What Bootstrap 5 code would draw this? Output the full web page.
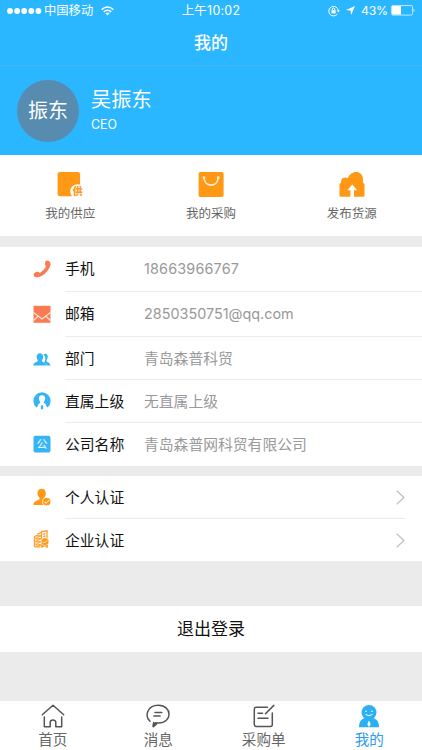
<!DOCTYPE html>
<html lang="zh-CN">
<head>
<meta charset="utf-8">
<meta name="viewport" content="width=device-width, initial-scale=1">
<title>我的</title>
<link href="https://cdn.jsdelivr.net/npm/bootstrap@5.3.0/dist/css/bootstrap.min.css" rel="stylesheet">
<style>
body{font-family:Inter,"Noto Sans CJK SC",sans-serif;background:#ebebeb;color:#111;line-height:1;height:750px;overflow:hidden}
svg{display:block;flex:none}
.top-area{background:#2bb7ff;height:155px}
.status{height:22px;font-size:12.3px;padding:0 7px 0 7px}
.status>div{flex:1 1 0}
.status>.clock{flex:none;font-size:12.4px;letter-spacing:.3px;padding-top:1px}
.carrier{padding:1px 0 0 2px}
.percent{letter-spacing:-.2px;padding:0 3px 0 6px}
.title-bar{height:44px;font-size:17px;font-weight:500;border-bottom:1px solid #43b4ef;padding-bottom:1px}
.profile{height:89px;padding-left:17px;gap:12px}
.avatar{width:62px;height:62px;background:#588bb0;font-size:20px;padding-top:1px}
.pname{font-size:20.2px;margin:1px 0 9px}
.prole{font-size:12.4px}
.shortcuts{height:81px;font-size:12.5px;color:#666}
.shortcuts svg{margin:15px 0 10px}
.contact{margin-top:11px}
.certs{margin-top:10px}
.info-row{height:43px;padding-left:33px;font-size:14.8px}
.info-row.tall{height:45px}
.info-row>svg{margin-bottom:2px}
.info-row>svg.people{margin:3px 0 0}
.info-row .cell{border-bottom:1px solid #ebebeb;margin-left:14px}
.info-row:last-child .cell{border-bottom:0}
.key,.val,.cell>span{padding-top:2px}
.tall .key{padding-top:1px}
.key{width:79px}
.val{color:#999}
.cell>.num{font-size:14.4px;padding-top:0}
.phone{letter-spacing:.17px}
.linkrow{padding-right:17px}
.linkrow:last-child{height:42px}
.logout{height:46px;font-size:17px;margin-top:45px}
.tabs{height:49px;margin-top:49px;font-size:14.6px;color:#666}
.tabs svg{margin:3px 0 5px}
.tabs .current{color:#2c9bf0}
</style>
<script src="https://cdn.jsdelivr.net/npm/bootstrap@5.3.0/dist/js/bootstrap.bundle.min.js"></script>
</head>
<body>
<header class="top-area text-white">
  <div class="status d-flex align-items-center">
    <div class="d-flex align-items-center">
      <svg width="35" height="8" fill="#fff"><circle cx="3" cy="4" r="2.9"/><circle cx="10.1" cy="4" r="2.9"/><circle cx="17.2" cy="4" r="2.9"/><circle cx="24.3" cy="4" r="2.9"/><circle cx="31.4" cy="4" r="2.9"/></svg>
      <span class="carrier">中国移动</span>
      <svg class="ms-2" width="13" height="10" viewBox="0 0 13 10" fill="none" stroke="#fff" stroke-width="1.6"><path d="M.7 3.6Q6.500-1.600 12.300 3.600M2.800 5.900Q6.500 2.600 10.200 5.900"/><path d="M4.400 7.200Q6.500 5.600 8.600 7.200L6.500 9.600Z" fill="#fff" stroke="none"/></svg>
    </div>
    <div class="clock">上午10:02</div>
    <div class="d-flex align-items-center justify-content-end">
      <svg width="12" height="12" viewBox="0 0 12 12" fill="none" stroke="#fff"><path d="M9.400 9A4.800 4.800 0 1 1 10.300 5.500"/><path d="M8.700 5.300h3.200l-1.600 2.100z" fill="#fff" stroke="none"/><path d="M3.400 5.200h4.200v3.200H3.400z" fill="#fff" stroke="none"/><path d="M4.300 5.300V4.200a1.200 1.200 0 0 1 2.400 0v1.100"/></svg>
      <svg style="margin-left:6px" width="9" height="9" viewBox="0 0 9 9"><path d="M9 0 5.200 9 4.500 4.600 0 4z" fill="#fff"/></svg>
      <span class="percent">43%</span>
      <svg width="24" height="11" viewBox="0 0 24 11"><rect x=".5" y=".5" width="21" height="9.600" rx="1.500" fill="none" stroke="#fff" stroke-opacity=".65"/><path d="M1 1h9v8.600H1z" fill="#fff"/><path d="M22.600 3.600q1.500 1.700 0 3.500z" fill="#fff"/></svg>
    </div>
  </div>
  <div class="title-bar d-flex align-items-center justify-content-center">我的</div>
  <div class="profile d-flex align-items-center">
    <div class="avatar rounded-circle d-flex align-items-center justify-content-center">振东</div>
    <div><div class="pname">吴振东</div><div class="prole">CEO</div></div>
  </div>
</header>

<main>
  <section class="shortcuts bg-white d-flex text-center">
    <div class="col-4 d-flex flex-column align-items-center">
      <svg width="26" height="28" viewBox="0 0 26 28"><rect x=".6" y="2" width="22.500" height="24.300" rx="2.500" fill="#ff9815"/><circle cx="20.600" cy="21.600" r="7.400" fill="#fff"/><text x="15.800" y="25.400" font-size="9.800" font-weight="900" fill="#ff9815">供</text></svg>
      <span>我的供应</span>
    </div>
    <div class="col-4 d-flex flex-column align-items-center">
      <svg width="26" height="28" viewBox="0 0 26 28"><rect x=".6" y="2" width="25" height="25" rx="1.700" fill="#ff9815"/><path d="M6 8.200c1 9.200 13.200 9.200 14.200 0" fill="none" stroke="#fff1cf" stroke-width="1.600"/><circle cx="6" cy="7.700" r="1.400" fill="#fff1cf"/><circle cx="20.200" cy="7.700" r="1.400" fill="#fff1cf"/></svg>
      <span>我的采购</span>
    </div>
    <div class="col-4 d-flex flex-column align-items-center">
      <svg width="26" height="28" viewBox="0 0 26 28"><path d="M1.600 26.800Q.5 26.800.5 25.500V14.400Q.5 13.400 2 13C1.600 8.500 5 6.400 8.800 8.200 12-.2 23.500-.2 24 9v4q1.500.2 1.500 1.400v11.200q0 1.200-1.200 1.200z" fill="#ff9815"/><path d="M13.200 14.500l5 5.800H15v7h-3.600v-7H8.400z" fill="#fff"/></svg>
      <span>发布货源</span>
    </div>
  </section>

  <section class="contact bg-white">
    <div class="info-row tall d-flex">
      <svg class="align-self-center" width="18" height="18" viewBox="0 0 18 18"><path d="M12.400 1.300Q14 .1 15 .5L17.300 2.300Q18 4.500 16.700 7.200 12.500 15.500 5 17.200 2.200 17.800.9 15.900L.6 13.800Q2.600 11.700 4.600 11.400L6.900 13Q10.800 10.700 12.900 6.800L11.900 4.200z" fill="#fa7b52"/></svg>
      <div class="cell d-flex flex-fill align-items-center"><span class="key">手机</span><span class="val num phone">18663966767</span></div>
    </div>
    <div class="info-row tall d-flex">
      <svg class="align-self-center" width="18" height="18" viewBox="0 0 18 18"><path d="M.5.800h17v17H.5z" fill="#fa7b52"/><path d="M.5 7.500 9 14l8.500-6.500M.5 15.500 5 11.400M17.500 15.500 13 11.400" fill="none" stroke="#ffe7dd" stroke-width="1.200"/></svg>
      <div class="cell d-flex flex-fill align-items-center"><span class="key">邮箱</span><span class="val num">2850350751@qq.com</span></div>
    </div>
    <div class="info-row d-flex">
      <svg class="people align-self-center" width="18" height="18" viewBox="0 0 18 18"><g transform="translate(0 2)"><path d="M10.300 1.200c3.300-1.800 5.200 1 4.200 4.100-.3 1.200-1.100 1.500-1 2.800.2 1.300 3.900 1.400 3.900 4.500H14q-.3-2.200-3-3.300c1.700-2.200 2-5.500-.7-8.100z" fill="#35b5f5"/><path d="M3.600 3.900c0-4.900 6.600-4.900 6.600 0 0 1.700-.8 2.300-1.200 3.400-.7 2.200 4.500 1.700 4.700 5.300H.2c0-3.700 5.200-3.100 4.600-5.300-.3-1.100-1.200-1.700-1.200-3.400z" fill="#35b5f5"/></g></svg>
      <div class="cell d-flex flex-fill align-items-center"><span class="key">部门</span><span class="val">青岛森普科贸</span></div>
    </div>
    <div class="info-row d-flex">
      <svg class="align-self-center" width="18" height="18" viewBox="0 0 18 18"><path d="M3.400 15.500A8.600 8.600 0 1 1 14.600 15.500L12.700 13.500C14 12.200 11 11.500 10.700 10.200 13.300 6.600 12.300 3.300 9 3.300S4.700 6.600 7.300 10.200C7 11.500 4 12.200 5.300 13.500z" fill="#35b5f5"/><path d="M8.200 13.300h1.600l.6 2.900L9 17.800l-1.400-1.600z" fill="#35b5f5"/></svg>
      <div class="cell d-flex flex-fill align-items-center"><span class="key">直属上级</span><span class="val">无直属上级</span></div>
    </div>
    <div class="info-row d-flex">
      <svg class="align-self-center" width="18" height="18" viewBox="0 0 18 18"><rect x=".5" y=".800" width="17" height="16.700" rx="2" fill="#35b5f5"/><text x="3.500" y="13.300" font-size="11" fill="#fff">公</text></svg>
      <div class="cell d-flex flex-fill align-items-center"><span class="key">公司名称</span><span class="val">青岛森普网科贸有限公司</span></div>
    </div>
  </section>

  <section class="certs bg-white">
    <div class="info-row linkrow d-flex">
      <svg class="align-self-center" width="18" height="18" viewBox="0 0 18 18"><path d="M4.500 5.300C4.300-.7 13-.7 12.800 5.300c0 2-.8 3.500-2.200 4.800-.2 1.200 1 1.400 2.700 2V17H.5c-.7-4.600 6.300-4.300 6.200-6.900C5.300 8.800 4.500 7.300 4.500 5.300z" fill="#ff9815"/><circle cx="13.700" cy="13.700" r="4.100" fill="#ff9815" stroke="#fff" stroke-width=".8"/><path d="m11.500 13.700 1.600 1.600 3-3.200" fill="none" stroke="#fff"/></svg>
      <div class="cell d-flex flex-fill align-items-center justify-content-between"><span>个人认证</span><svg width="9" height="15" viewBox="0 0 9 15" fill="none" stroke="#c4c4c8" stroke-width="1.400"><path d="m.7.700 7.200 6.800-7.200 6.800"/></svg></div>
    </div>
    <div class="info-row linkrow d-flex">
      <svg class="align-self-center" width="18" height="18" viewBox="0 0 18 18" fill="none" stroke="#ff9d2c"><path d="M1.500 16.800V6.500L5 5.300M5 16.800V4L8.500 2.500V9M8.500 3V1.600L14 .8V8M1.500 16.800H7.500" stroke-width="1.300"/><path d="M3.300 7.500v9M6.900 5v11.500" stroke-width="1.700" stroke-dasharray="2 1"/><path d="M11.300 3.300v4" stroke-width="2.200" stroke-dasharray="1.500 .8"/><path d="M8.600 13.500v4l2.900-1.400 3 1.400v-4" fill="#ff9815" stroke-width=".8"/><circle cx="12" cy="11.600" r="3.900" fill="#ff9815" stroke="#fff" stroke-width=".5"/><path d="m10.200 11.600 1.400 1.400 2.400-2.500" stroke="#fff"/></svg>
      <div class="cell d-flex flex-fill align-items-center justify-content-between"><span>企业认证</span><svg width="9" height="15" viewBox="0 0 9 15" fill="none" stroke="#c4c4c8" stroke-width="1.400"><path d="m.7.700 7.200 6.800-7.200 6.800"/></svg></div>
    </div>
  </section>

  <div class="logout bg-white d-flex align-items-center justify-content-center">退出登录</div>
</main>

<nav class="tabs bg-white d-flex">
  <div class="col-3 d-flex flex-column align-items-center">
    <svg width="24" height="24" viewBox="0 0 24 24" fill="none" stroke="#555" stroke-width="1.500" stroke-linecap="round" stroke-linejoin="round"><path d="M1.300 10.800 12 1.300l10.700 9.500M3.300 13v9.700h5.900v-4.200c0-3.300 5.600-3.300 5.600 0v4.200h5.900V13"/></svg>
    <span>首页</span>
  </div>
  <div class="col-3 d-flex flex-column align-items-center">
    <svg width="24" height="24" viewBox="0 0 24 24" fill="none" stroke="#555" stroke-width="1.500" stroke-linecap="round" stroke-linejoin="round"><path d="M4 17.300C-1.400 12.500.8 1.300 12.300 1.300c14.300 0 14.300 17.800 0 17.800-1 0-1.900-.1-2.700-.3L7 22.500l.7-4M7.500 22.600l3.200-3"/><path d="M9 8.500h6.800M7.800 12h6.300"/></svg>
    <span>消息</span>
  </div>
  <div class="col-3 d-flex flex-column align-items-center">
    <svg width="24" height="24" viewBox="0 0 24 24" fill="none" stroke="#555" stroke-width="1.500" stroke-linecap="round" stroke-linejoin="round"><path d="M15.500 3.300H4.300q-2 0-2 2v15.200q0 2 2 2h14q2 0 2-2V9M13.500 9.800l8.300-8.400M6 9.300h4.500M6 14.300h10"/></svg>
    <span>采购单</span>
  </div>
  <div class="current col-3 d-flex flex-column align-items-center">
    <svg width="24" height="24" viewBox="0 0 24 24"><circle cx="12" cy="8.500" r="7.500" fill="#2bb0f5"/><path d="M2 23.200c0-5 2-8.200 6-9.200h8c4 1 6 4.200 6 9.200z" fill="#2bb0f5"/><circle cx="9" cy="7.200" r=".8" fill="#fff"/><circle cx="15" cy="7.200" r=".8" fill="#fff"/><path d="M8.500 10.300q3.500 3 7 0" fill="none" stroke="#fff"/><path d="m12 16.600 1.700 3.600-1.700 2.900-1.700-2.900z" fill="#fff"/></svg>
    <span>我的</span>
  </div>
</nav>
</body>
</html>
